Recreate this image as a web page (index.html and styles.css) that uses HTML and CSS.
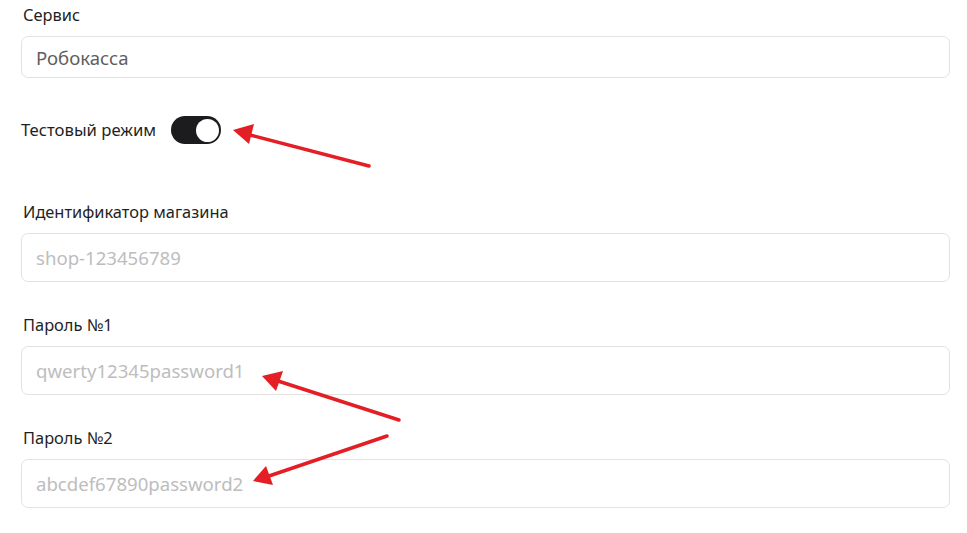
FILE: index.html
```html
<!DOCTYPE html>
<html lang="ru">
<head>
<meta charset="utf-8">
<link rel="stylesheet" href="styles.css">
</head>
<body>
<div class="form">
  <div class="field first">
    <div class="label">Сервис</div>
    <div class="input small value">Робокасса</div>
  </div>
  <div class="toggle-row">
    <span class="toggle-label">Тестовый режим</span>
    <span class="toggle"><span class="knob"></span></span>
  </div>
  <div class="field">
    <div class="label">Идентификатор магазина</div>
    <div class="input placeholder">shop-123456789</div>
  </div>
  <div class="field">
    <div class="label">Пароль №1</div>
    <div class="input placeholder">qwerty12345password1</div>
  </div>
  <div class="field">
    <div class="label">Пароль №2</div>
    <div class="input placeholder">abcdef67890password2</div>
  </div>
</div>
<svg class="arrows" width="967" height="533" viewBox="0 0 967 533">
  <g stroke="#e31e24" stroke-width="3.5" stroke-linecap="round" fill="#e31e24">
    <line x1="369" y1="166" x2="250" y2="135"/>
    <polygon points="233,130 254,124 249,144" stroke="none"/>
    <line x1="399" y1="420" x2="278" y2="381"/>
    <polygon points="262,376 283,371 276,391" stroke="none"/>
    <line x1="387" y1="436" x2="269" y2="476"/>
    <polygon points="253,481 266,466 273,485" stroke="none"/>
  </g>
</svg>
</body>
</html>
```

FILE: styles.css
```css
html, body {
  margin: 0;
  padding: 0;
  background: #ffffff;
}
body {
  font-family: "Noto Sans", "Open Sans", sans-serif;
  color: #1f1f1f;
  position: relative;
  width: 967px;
  height: 533px;
  overflow: hidden;
}
.form {
  padding: 4px 17px 0 21px;
}
.field {
  display: flex;
  flex-direction: column;
}
.label {
  font-size: 16.4px;
  line-height: 22px;
  padding-left: 2px;
  margin-bottom: 10px;
}
.input {
  height: 47px;
  border: 1px solid #e2e2e2;
  border-radius: 7px;
  padding-left: 14px;
  display: flex;
  align-items: center;
  font-size: 18.6px;
  margin-bottom: 32px;
}
.input.small {
  height: 40px;
  margin-bottom: 0;
}
.value {
  color: #5f5f5f;
}
.placeholder {
  color: #bdbdbd;
}
.toggle-row {
  display: flex;
  align-items: center;
  gap: 15px;
  margin-top: 38px;
  margin-bottom: 57px;
}
.toggle-label {
  font-size: 16.7px;
  line-height: 22px;
}
.toggle {
  width: 50px;
  height: 28px;
  border-radius: 14px;
  background: #1c1c1e;
  display: flex;
  align-items: center;
  justify-content: flex-end;
  padding: 0 2px;
  box-sizing: border-box;
}
.knob {
  width: 23px;
  height: 23px;
  border-radius: 50%;
  background: #ffffff;
}
.arrows {
  position: absolute;
  left: 0;
  top: 0;
  pointer-events: none;
}
```
